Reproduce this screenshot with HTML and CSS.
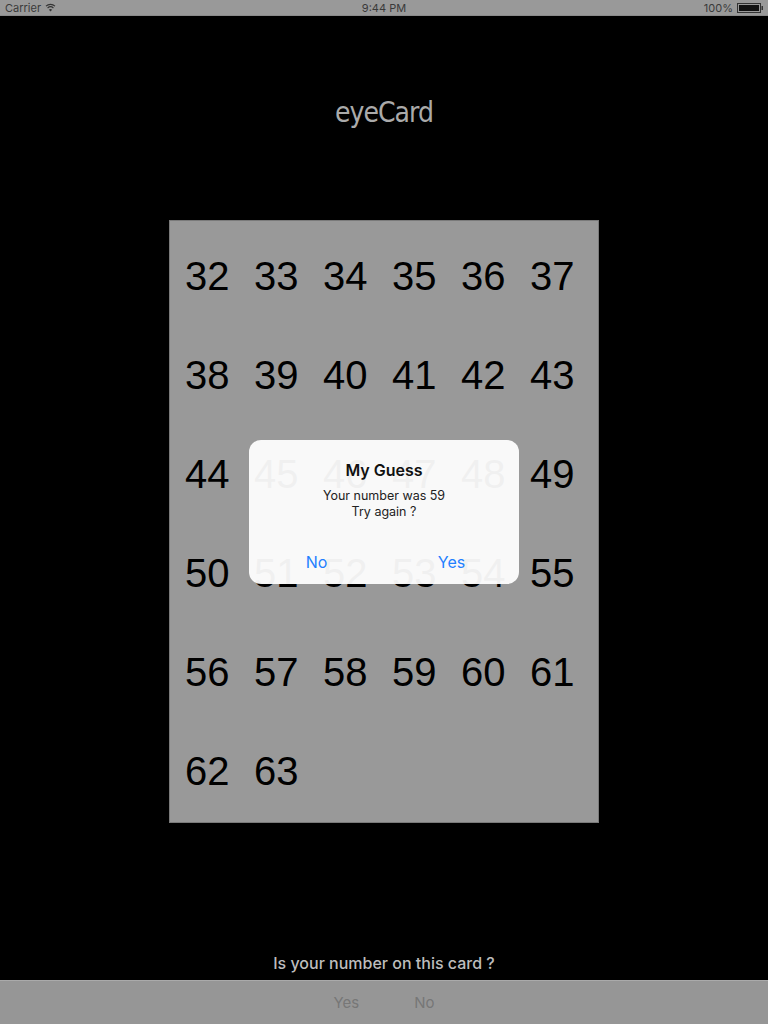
FILE: index.html
```html
<!DOCTYPE html>
<html>
<head>
<meta charset="utf-8">
<title>eyeCard</title>
<link rel="stylesheet" href="styles.css">
</head>
<body>
<div class="screen">
  <div class="statusbar">
    <div class="sb-left">Carrier
      <svg class="wifi" width="11" height="9" viewBox="0 0 11 9">
        <path d="M1 3.2 A6.5 6.5 0 0 1 10 3.2" fill="none" stroke="#333" stroke-width="1.1"/>
        <path d="M2.6 5 A4.3 4.3 0 0 1 8.4 5" fill="none" stroke="#333" stroke-width="1.1"/>
        <path d="M5.5 8.6 L3.9 6.8 A2.3 2.3 0 0 1 7.1 6.8 Z" fill="#333"/>
      </svg>
    </div>
    <div class="sb-center">9:44 PM</div>
    <div class="sb-right">100%
      <svg class="battery" width="27" height="10" viewBox="0 0 27 10">
        <rect x="0.5" y="0.5" width="23" height="9" fill="none" stroke="#333" stroke-width="1"/>
        <rect x="2" y="2" width="20" height="6" fill="#111"/>
        <rect x="24.5" y="3" width="1.5" height="4" fill="#333"/>
      </svg>
    </div>
  </div>

  <h1 class="title">eyeCard</h1>

  <div class="card">
    <div class="grid">
      <span>32</span><span>33</span><span>34</span><span>35</span><span>36</span><span>37</span>
      <span>38</span><span>39</span><span>40</span><span>41</span><span>42</span><span>43</span>
      <span>44</span><span>45</span><span>46</span><span>47</span><span>48</span><span>49</span>
      <span>50</span><span>51</span><span>52</span><span>53</span><span>54</span><span>55</span>
      <span>56</span><span>57</span><span>58</span><span>59</span><span>60</span><span>61</span>
      <span>62</span><span>63</span>
    </div>
  </div>

  <div class="question">Is your number on this card ?</div>
  <div class="toolbar">
    <span class="tb-btn">Yes</span>
    <span class="tb-btn">No</span>
  </div>

  <div class="alert">
    <div class="alert-body">
      <div class="alert-title">My Guess</div>
      <div class="alert-msg">Your number was 59<br>Try again ?</div>
    </div>
    <div class="alert-actions">
      <span class="alert-btn">No</span>
      <span class="alert-btn">Yes</span>
    </div>
  </div>
</div>
</body>
</html>
```
FILE: styles.css
```css
html, body {
  margin: 0;
  padding: 0;
  background: #000;
}
.screen {
  position: relative;
  width: 768px;
  height: 1024px;
  display: flex;
  flex-direction: column;
  background: #000;
  overflow: hidden;
  font-family: "Liberation Sans", Arial, sans-serif;
}
.statusbar {
  height: 15px;
  background: #999;
  border-bottom: 1px solid #8a8a8a;
  display: flex;
  align-items: center;
  justify-content: space-between;
  padding: 0 4px 0 5px;
  font-family: Inter, "Liberation Sans", sans-serif;
  font-size: 11px;
  color: #3a3a3a;
  position: relative;
}
.sb-left, .sb-right {
  display: flex;
  align-items: center;
  gap: 4px;
}
.sb-center {
  position: absolute;
  left: 0;
  right: 0;
  text-align: center;
}
.title {
  margin: 79px 0 0;
  height: 36px;
  line-height: 36px;
  text-align: center;
  font-family: "DejaVu Sans Condensed", "DejaVu Sans", sans-serif;
  font-stretch: condensed;
  font-weight: normal;
  font-size: 28px;
  letter-spacing: -1px;
  color: #aaa;
}
.card {
  margin: 89px auto 0;
  width: 428px;
  height: 601px;
  background: #999;
  border: 1px solid #7a7a7a;
  box-sizing: content-box;
}
.grid {
  display: grid;
  grid-template-columns: repeat(6, 69px);
  grid-auto-rows: 99px;
  padding: 6px 0 0 15px;
  font-size: 40px;
  color: #000;
}
.grid span {
  line-height: 99px;
}
.question {
  margin-top: auto;
  height: 20px;
  line-height: 20px;
  text-align: center;
  font-family: Inter, "Liberation Sans", sans-serif;
  font-weight: 500;
  font-size: 16px;
  color: #bdbdbd;
  margin-bottom: 7px;
}
.toolbar {
  height: 43px;
  background: #969696;
  border-top: 1px solid #aaa;
  display: flex;
  justify-content: center;
  align-items: center;
  gap: 55px;
  font-family: Inter, "Liberation Sans", sans-serif;
  font-size: 15px;
  color: #777;
}
.alert {
  position: absolute;
  left: 249px;
  top: 440px;
  width: 270px;
  height: 144px;
  border-radius: 12px;
  background: rgba(255, 255, 255, 0.94);
  display: flex;
  flex-direction: column;
  font-family: Inter, "Liberation Sans", sans-serif;
  text-align: center;
}
.alert-body {
  padding: 19px 16px 0;
}
.alert-title {
  font-size: 16px;
  font-weight: 600;
  line-height: 22px;
  color: #111;
}
.alert-msg {
  margin-top: 7px;
  font-size: 12.5px;
  line-height: 16px;
  color: #222;
}
.alert-actions {
  margin-top: auto;
  height: 44px;
  display: flex;
}
.alert-btn {
  flex: 1;
  line-height: 44px;
  font-size: 16px;
  color: #1f80ff;
}
```
